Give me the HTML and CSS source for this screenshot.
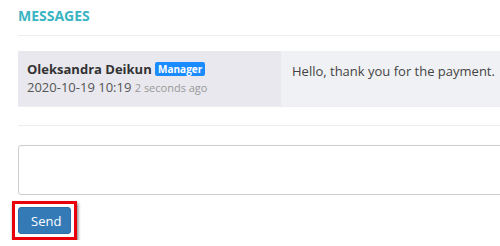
FILE: index.html
```html
<!DOCTYPE html>
<html lang="en">
<head>
  <meta charset="UTF-8">
  <title>Messages</title>
  <link rel="stylesheet" href="styles.css">
</head>
<body>
  <div class="panel">
    <h2 class="title">MESSAGES</h2>

    <div class="message">
      <div class="author">
        <div class="name">Oleksandra Deikun <span class="badge">Manager</span></div>
        <div class="date">2020-10-19 10:19 <span class="ago">2 seconds ago</span></div>
      </div>
      <div class="text">Hello, thank you for the payment.</div>
    </div>

    <form class="reply">
      <textarea class="input"></textarea>
      <div class="actions">
        <span class="highlight"><button type="submit" class="btn">Send</button></span>
      </div>
    </form>
  </div>
</body>
</html>
```

FILE: styles.css
```css
body {
  margin: 0;
  font-family: "Open Sans", Arial, sans-serif;
  background: #fff;
  color: #444;
  overflow: hidden;
}
.panel {
  width: 620px;
  padding: 0 0 0 18px;
}
.title {
  margin: 0;
  padding: 7px 0 10px;
  font-size: 14px;
  font-weight: 700;
  color: #3ab4c2;
  line-height: 18px;
  border-bottom: 1px solid #eee;
}
.message {
  display: flex;
  margin-top: 15px;
  height: 55px;
  border-bottom: 1px solid #eee;
}
.author {
  width: 263px;
  background: #e8e8ee;
  padding: 10px 0 0 9px;
  box-sizing: border-box;
}
.name {
  font-size: 13px;
  font-weight: 700;
  color: #333;
  line-height: 16px;
}
.badge {
  display: inline-block;
  background: #1a8cff;
  color: #fff;
  font-size: 10px;
  font-weight: 700;
  line-height: 14px;
  padding: 0 3px;
  border-radius: 2px;
  vertical-align: 1px;
}
.date {
  font-size: 13px;
  color: #555;
  line-height: 18px;
  margin-top: 1px;
}
.ago {
  font-size: 11px;
  color: #999;
}
.text {
  flex: 1;
  background: #f0f1f4;
  font-size: 13px;
  color: #444;
  padding: 11px 0 0 11px;
}
.reply {
  margin-top: 18px;
  border-top: 1px solid #eee;
  padding-top: 19px;
}
.input {
  display: block;
  width: 100%;
  height: 50px;
  box-sizing: border-box;
  border: 1px solid #ccc;
  border-radius: 3px;
  resize: none;
  margin: 0;
}
.actions {
  margin-top: 6px;
  margin-left: -6px;
}
.highlight {
  display: inline-block;
  border: 3px solid #e8000b;
  padding: 3px;
  box-shadow: 1px 2px 3px rgba(0,0,0,0.55);
}
.btn {
  display: block;
  background: #337ab7;
  color: #fff;
  border: 1px solid #2e6da4;
  border-radius: 3px;
  font-family: "Open Sans", Arial, sans-serif;
  font-size: 13px;
  padding: 4px 12px;
  line-height: 18px;
  width: 53px;
  height: 27px;
  cursor: pointer;
}
```
